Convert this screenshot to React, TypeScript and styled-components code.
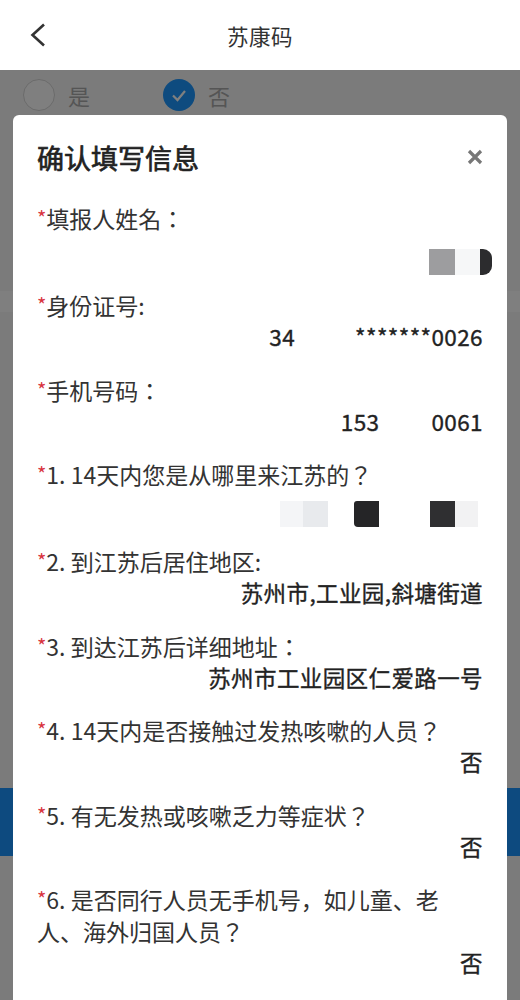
import styled, { createGlobalStyle } from "styled-components";

const GlobalStyle = createGlobalStyle`
  html, body {
    margin: 0;
    padding: 0;
  }
  body {
    font-family: "Noto Sans CJK SC", "Noto Sans", sans-serif;
    background: #ffffff;
    color: #333;
    text-spacing-trim: space-all;
  }
`;

const Page = styled.div`
  position: relative;
  width: 520px;
  height: 1000px;
  overflow: hidden;
  background: #f7f7f7;
`;

const Header = styled.header`
  display: grid;
  grid-template-columns: 80px 1fr 80px;
  align-items: center;
  height: 70px;
  background: #ffffff;
`;

const BackButton = styled.div`
  display: flex;
  align-items: center;
  padding-left: 30px;
  height: 100%;
`;

const HeaderTitle = styled.h1`
  margin: 0;
  text-align: center;
  font-size: 21.5px;
  font-weight: 400;
  color: #333;
  letter-spacing: 0.5px;
`;

const RadioRow = styled.div`
  display: flex;
  align-items: center;
  padding: 8px 23px 0;
  height: 33px;
`;

const Option = styled.div`
  display: flex;
  align-items: center;
  gap: 13px;
  width: 140px;
  font-size: 22px;
  color: #aaa;
`;

const Circle = styled.span<{ $checked?: boolean }>`
  display: flex;
  align-items: center;
  justify-content: center;
  width: 32px;
  height: 32px;
  box-sizing: border-box;
  border-radius: 50%;
  border: ${(p) => (p.$checked ? "none" : "1.5px solid #d6d6d6")};
  background: ${(p) => (p.$checked ? "#1c96fe" : "#ffffff")};
`;

const Band = styled.div`
  margin-top: 180px;
  height: 21px;
  background: #ffffff;
`;

const SubmitBar = styled.div`
  margin-top: 476px;
  height: 68px;
  background: #1a94fe;
`;

const Overlay = styled.div`
  position: absolute;
  top: 70px;
  left: 0;
  right: 0;
  bottom: 0;
  background: rgba(0, 0, 0, 0.5);
  overflow: hidden;
`;

const Modal = styled.section`
  margin: 45px 13px 0;
  padding: 22px 24px 60px;
  background: #ffffff;
  border-radius: 6px;
`;

const ModalHead = styled.div`
  display: flex;
  align-items: center;
  justify-content: space-between;
  height: 40px;
`;

const ModalTitle = styled.h2`
  margin: 0;
  font-size: 27px;
  font-weight: 400;
  -webkit-text-stroke: 0.7px #222;
  color: #222;
`;

const FieldList = styled.div`
  margin-top: 25px;
`;

const Label = styled.div`
  font-family: "Noto Sans CJK JP", "Noto Sans CJK SC", sans-serif;
  font-size: 23px;
  line-height: 32px;
  color: #333;
`;

const Star = styled.span`
  color: #d8343e;
  font-size: 20px;
  line-height: 32px;
  vertical-align: top;
`;

const Value = styled.div`
  text-align: right;
  font-size: 22.5px;
  line-height: 31px;
  font-weight: 400;
  -webkit-text-stroke: 0.35px #222;
  color: #222;
  margin-bottom: 21.5px;
  letter-spacing: 0.4px;
`;

const HiddenValue = styled.div<{ $lift?: number }>`
  display: flex;
  justify-content: flex-end;
  align-items: center;
  height: 55px;
  padding-bottom: ${(p) => p.$lift ?? 0}px;
  box-sizing: border-box;
`;

const Gap = styled.span<{ $w: number }>`
  display: inline-block;
  width: ${(p) => p.$w}px;
`;

const Redact = styled.span<{ $w: number; $c: string; $r?: string }>`
  display: block;
  width: ${(p) => p.$w}px;
  height: 26px;
  background: ${(p) => p.$c};
  border-radius: ${(p) => p.$r ?? "0"};
`;

const Field = ({ label, children }: { label: string; children: React.ReactNode }) => (
  <>
    <Label>
      <Star>*</Star>
      {label}
    </Label>
    {children}
  </>
);

const App = () => {
  return (
    <>
      <GlobalStyle />
      <Page>
        <Header>
          <BackButton>
            <svg width="16" height="24" viewBox="0 0 16 24">
              <polyline points="14,1.5 2.5,12 14,22.5" fill="none" stroke="#333" strokeWidth="2.6" />
            </svg>
          </BackButton>
          <HeaderTitle>苏康码</HeaderTitle>
          <span />
        </Header>

        <RadioRow>
          <Option>
            <Circle />
            是
          </Option>
          <Option>
            <Circle $checked>
              <svg width="32" height="32" viewBox="0 0 32 32">
                <polyline points="10,16.5 14.5,21 22,12" fill="none" stroke="#fff" strokeWidth="2.2" />
              </svg>
            </Circle>
            否
          </Option>
        </RadioRow>
        <Band />
        <SubmitBar />

        <Overlay>
          <Modal>
            <ModalHead>
              <ModalTitle>确认填写信息</ModalTitle>
              <svg width="16" height="16" viewBox="0 0 16 16">
                <path d="M2 2 L14 14 M14 2 L2 14" stroke="#777" strokeWidth="3.2" />
              </svg>
            </ModalHead>

            <FieldList>
              <Field label="填报人姓名：">
                <HiddenValue style={{ marginRight: -9 }}>
                  <Redact $w={26} $c="#9d9d9f" />
                  <Redact $w={25} $c="#f6f7f8" />
                  <Redact $w={12} $c="#2c2c2e" $r="0 9px 9px 0" />
                </HiddenValue>
              </Field>

              <Field label="身份证号:">
                <Value>
                  34<Gap $w={60} />*******0026
                </Value>
              </Field>

              <Field label="手机号码：">
                <Value>
                  153<Gap $w={52} />0061
                </Value>
              </Field>

              <Field label="1. 14天内您是从哪里来江苏的？">
                <HiddenValue $lift={8}>
                  <Redact $w={23} $c="#f4f5f7" />
                  <Redact $w={25} $c="#e8eaed" />
                  <Gap $w={26} />
                  <Redact $w={25} $c="#252527" $r="3px 0 0 4px" />
                  <Gap $w={51} />
                  <Redact $w={25} $c="#2f2f31" />
                  <Redact $w={23} $c="#f2f2f3" />
                  <Gap $w={5} />
                </HiddenValue>
              </Field>

              <Field label="2. 到江苏后居住地区:">
                <Value>苏州市,工业园,斜塘街道</Value>
              </Field>

              <Field label="3. 到达江苏后详细地址：">
                <Value>苏州市工业园区仁爱路一号</Value>
              </Field>

              <Field label="4. 14天内是否接触过发热咳嗽的人员？">
                <Value>否</Value>
              </Field>

              <Field label="5. 有无发热或咳嗽乏力等症状？">
                <Value>否</Value>
              </Field>

              <Field label="6. 是否同行人员无手机号，如儿童、老人、海外归国人员？">
                <Value>否</Value>
              </Field>
            </FieldList>
          </Modal>
        </Overlay>
      </Page>
    </>
  );
};

export default App;
